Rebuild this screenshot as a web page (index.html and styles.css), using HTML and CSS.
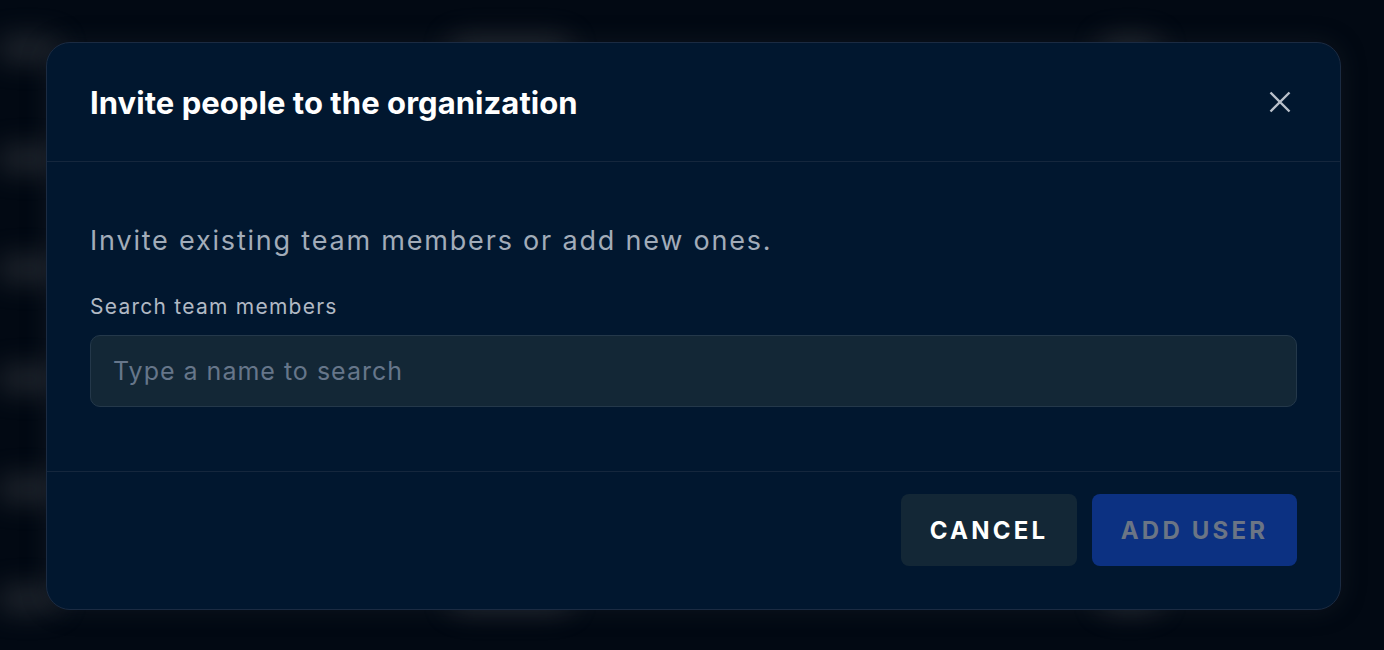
FILE: index.html
```html
<!DOCTYPE html>
<html>
<head>
<meta charset="utf-8">
<link rel="stylesheet" href="styles.css">
</head>
<body>
<div class="backdrop">
  <div class="bg-row"><span class="blob w1"></span><span class="blob w2"></span><span class="blob w3"></span></div>
  <div class="bg-row"><span class="blob w1"></span><span class="blob w2"></span><span class="blob w3"></span></div>
  <div class="bg-row"><span class="blob w1"></span><span class="blob w2"></span><span class="blob w3"></span></div>
  <div class="bg-row"><span class="blob w1"></span><span class="blob w2"></span><span class="blob w3"></span></div>
  <div class="bg-row"><span class="blob w1"></span><span class="blob w2"></span><span class="blob w3"></span></div>
  <div class="bg-row"><span class="blob w1"></span><span class="blob w2"></span><span class="blob w3"></span></div>
</div>
<div class="dialog">
  <div class="dialog-header">
    <h2 class="dialog-title">Invite people to the organization</h2>
    <button class="close-btn" aria-label="Close">
      <svg width="22" height="22" viewBox="0 0 22 22"><path d="M1.5 1.5L20.5 20.5M20.5 1.5L1.5 20.5" stroke="#b9c0ca" stroke-width="2.4" stroke-linecap="butt"/></svg>
    </button>
  </div>
  <div class="dialog-body">
    <p class="intro">Invite existing team members or add new ones.</p>
    <label class="field-label">Search team members</label>
    <div class="input">Type a name to search</div>
  </div>
  <div class="dialog-footer">
    <button class="btn btn-cancel">CANCEL</button>
    <button class="btn btn-add">ADD USER</button>
  </div>
</div>
</body>
</html>
```
FILE: styles.css
```css
html, body {
  margin: 0;
  padding: 0;
}
body {
  width: 1384px;
  height: 650px;
  overflow: hidden;
  background: #020913;
  font-family: Inter, "Noto Sans", sans-serif;
  position: relative;
}
.backdrop {
  height: 650px;
  overflow: hidden;
  display: flex;
  flex-direction: column;
  filter: blur(14px);
  opacity: 0.9;
}
.bg-row {
  height: 110px;
  flex: none;
  box-sizing: border-box;
  display: flex;
  align-items: flex-start;
  padding-top: 38px;
}
.blob {
  height: 22px;
  border-radius: 11px;
  background: #2a2f36;
  flex: none;
}
.w1 { width: 110px; margin-left: -50px; }
.w2 { width: 120px; margin-left: 390px; }
.w3 { width: 60px; margin-left: 530px; }
.dialog {
  position: absolute;
  left: 46px;
  top: 42px;
  width: 1293px;
  height: 566px;
  background: #01172f;
  border: 1px solid #1b2b42;
  border-radius: 24px;
  box-shadow: 0 0 24px rgba(40, 45, 55, 0.35);
  display: flex;
  flex-direction: column;
}
.dialog-header {
  height: 118px;
  flex: none;
  border-bottom: 1px solid #15273d;
  display: flex;
  align-items: center;
  justify-content: space-between;
  padding: 0 44px 0 43px;
}
.dialog-title {
  margin: 0;
  color: #ffffff;
  font-size: 31px;
  font-weight: 700;
  letter-spacing: 0.05px;
}
.close-btn {
  background: none;
  border: none;
  padding: 0;
  margin-right: 5px;
  display: flex;
  cursor: pointer;
}
.dialog-body {
  flex: 1;
  padding: 62px 43px 0 43px;
  border-bottom: 1px solid #15273d;
}
.intro {
  margin: 0;
  color: #a2acb9;
  font-size: 27px;
  letter-spacing: 1.8px;
  line-height: 34px;
}
.field-label {
  display: block;
  margin-top: 36px;
  color: #b1b9c4;
  font-size: 21px;
  letter-spacing: 1.25px;
  line-height: 26px;
}
.input {
  margin-top: 15px;
  height: 72px;
  box-sizing: border-box;
  background: #132736;
  border: 1px solid #24384a;
  border-radius: 10px;
  padding: 0 22px;
  display: flex;
  align-items: center;
  color: #66768a;
  font-size: 25px;
  letter-spacing: 1px;
}
.dialog-footer {
  height: 137px;
  flex: none;
  box-sizing: border-box;
  padding: 22px 43px 0 43px;
  display: flex;
  justify-content: flex-end;
  align-items: flex-start;
  gap: 15px;
}
.btn {
  height: 72px;
  border: none;
  border-radius: 8px;
  font-family: Inter, "Noto Sans", sans-serif;
  font-size: 24px;
  font-weight: 700;
  letter-spacing: 3.2px;
  cursor: pointer;
}
.btn-cancel {
  width: 176px;
  background: #132736;
  color: #ffffff;
}
.btn-add {
  width: 205px;
  background: #0c3182;
  color: #6b7585;
}
```
